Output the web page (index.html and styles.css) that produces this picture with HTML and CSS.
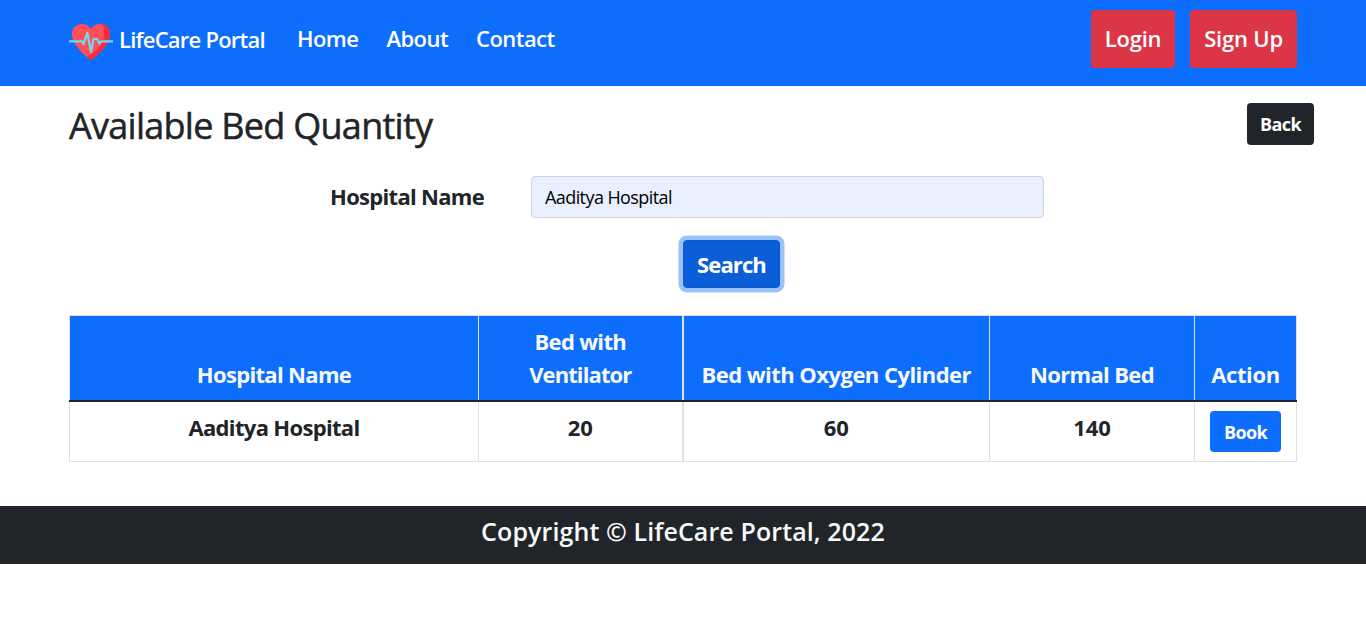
FILE: index.html
```html
<!DOCTYPE html>
<html lang="en">
<head>
<meta charset="utf-8">
<title>LifeCare Portal</title>
<link rel="stylesheet" href="styles.css">
</head>
<body>
<header class="navbar">
  <a class="brand">
    <svg class="logo" viewBox="0 0 44 38" aria-hidden="true">
      <path fill="#ff5058" d="M22 37C20 36 3 23 3 11.500C3 5 7 1 13 1C17 1 20 2.500 22 6C24 2.500 27 1 31 1C37 1 41 5 41 11.500C41 23 24 36 22 37Z"/>
      <path fill="#fb2b3a" d="M33 1.200C38 2 41 5.500 41 11.500C41 23 24 36 22 37C20.800 36.300 19 35 17.800 33.800C30 28 40 15 33 1.200Z"/>
      <path fill="none" stroke="#6ddcf5" stroke-width="2.200" stroke-linejoin="round" d="M0 18.300H13L14.500 21L18.300 9.800L22 29L24.500 16H28L30.500 20.500L32.300 18.300H44"/>
    </svg>
    <span class="brand-name">LifeCare Portal</span>
  </a>
  <nav class="links">
    <a class="home">Home</a>
    <a class="about">About</a>
    <a class="contact">Contact</a>
  </nav>
  <div class="auth">
    <a class="btn-auth login">Login</a>
    <a class="btn-auth signup">Sign Up</a>
  </div>
</header>
<main>
  <div class="title-row">
    <h1>Available Bed Quantity</h1>
    <button class="btn back">Back</button>
  </div>
  <form class="search-form">
    <div class="field">
      <label for="hospital">Hospital Name</label>
      <input id="hospital" type="text" value="Aaditya Hospital">
    </div>
    <button class="btn search" type="button">Search</button>
  </form>
  <table class="beds">
    <colgroup><col class="c-name"><col class="c-vent"><col class="c-oxy"><col class="c-normal"><col class="c-action"></colgroup>
    <thead>
      <tr><th>Hospital Name</th><th class="wide-rule">Bed with<br><span class="ventilator">Ventilator</span></th><th class="oxygen">Bed with Oxygen Cylinder</th><th>Normal Bed</th><th class="action-head">Action</th></tr>
    </thead>
    <tbody>
      <tr><td>Aaditya Hospital</td><td class="count wide-rule">20</td><td class="count">60</td><td class="count">140</td><td><button class="btn book">Book</button></td></tr>
    </tbody>
  </table>
</main>
<footer><span>Copyright © LifeCare Portal, 2022</span></footer>
</body>
</html>
```
FILE: styles.css
```css
* { box-sizing: border-box; }
body {
  margin: 0;
  background: #fff;
  color: #212529;
  font-family: "Segoe UI", "Open Sans", "Noto Sans", sans-serif;
}
.navbar {
  display: flex;
  height: 86px;
  padding: 10px 69px 0;
  background: #0d6efd;
  color: #fff;
  font-size: 22px;
  font-weight: 600;
  line-height: 33px;
  white-space: nowrap;
}
.brand { display: flex; width: 228px; padding-top: 13px; gap: 6px; }
.logo { width: 44px; height: 38px; flex: none; }
.brand-name { letter-spacing: -.77px; }
.links { display: flex; flex: 1; gap: 28px; padding-top: 12px; letter-spacing: -.55px; }
.auth { display: flex; gap: 15px; }
.btn-auth {
  height: 58px;
  padding-top: 12px;
  border-radius: 4px;
  background: #dc3545;
  text-align: center;
  letter-spacing: -.2px;
}
.login { width: 84px; }
.signup { width: 107px; }
.title-row {
  display: flex;
  justify-content: space-between;
  height: 90px;
  padding: 17px 52px 0 69px;
}
h1 {
  margin: -1px 0 0;
  font-size: 36px;
  font-weight: 500;
  line-height: 48px;
  letter-spacing: -.73px;
  -webkit-text-stroke: .5px #212529;
}
.btn {
  padding: 0;
  border: 0;
  border-radius: 4px;
  color: #fff;
  font-family: inherit;
  font-size: 18px;
  font-weight: 700;
  letter-spacing: -.6px;
}
.back { width: 67px; height: 42px; background: #212529; }
.search-form { display: flex; flex-direction: column; height: 139px; }
.field { display: flex; height: 64px; padding-left: 330px; }
label {
  width: 201px;
  font-size: 22px;
  font-weight: 700;
  line-height: 40px;
  letter-spacing: -.7px;
}
input {
  width: 513px;
  height: 42px;
  padding: 0 13px;
  border: 1px solid #ced4da;
  border-radius: 4px;
  background: #e8f0fe;
  color: #000;
  font-family: inherit;
  font-size: 18px;
  letter-spacing: -.58px;
}
.search {
  width: 97px;
  height: 48px;
  margin-left: 683px;
  border: 1px solid #0a58ca;
  background: #0b5ed7;
  box-shadow: 0 0 0 4.500px rgba(49, 132, 253, .5);
  font-size: 22px;
  letter-spacing: -.9px;
}
.beds {
  width: 1227px;
  margin-left: 69px;
  border-collapse: collapse;
  table-layout: fixed;
  font-size: 22px;
  font-weight: 700;
  line-height: 33px;
  letter-spacing: -.67px;
  text-align: center;
}
.c-name { width: 409px; }
.c-vent { width: 204px; }
.c-oxy { width: 307px; }
.c-normal { width: 205px; }
.c-action { width: 102px; }
.beds th, .beds td { border: 1px solid #dee2e6; }
.beds .wide-rule { border-right-width: 2px; }
.beds th {
  height: 85px;
  padding: 9px 0;
  background: #0d6efd;
  color: #f8f9fa;
  vertical-align: bottom;
  white-space: nowrap;
}
.beds thead th { border-bottom: 2px solid #212529; }
.beds td { height: 60px; padding: 9px 0; vertical-align: top; }
.ventilator { letter-spacing: -.9px; }
.oxygen { letter-spacing: -.54px; }
.action-head { letter-spacing: -.4px; }
.count { letter-spacing: 0; }
.book {
  display: block;
  width: 71px;
  height: 41px;
  margin: 0 auto;
  background: #0d6efd;
}
footer {
  height: 58px;
  margin-top: 44px;
  background: #212529;
  color: #f8f9fa;
  font-size: 25px;
  font-weight: 600;
  line-height: 51px;
  letter-spacing: .1px;
  text-align: center;
}
```
